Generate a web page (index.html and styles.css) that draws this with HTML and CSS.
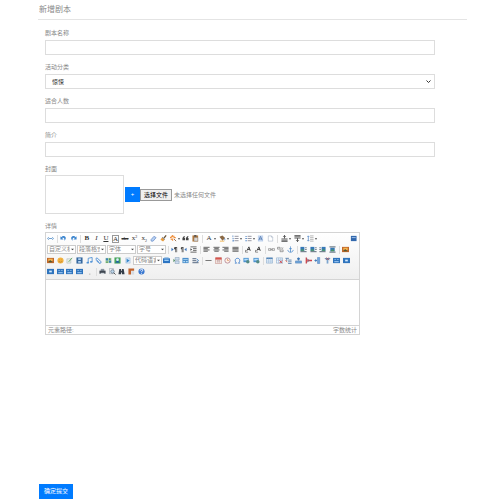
FILE: index.html
```html
<!DOCTYPE html>
<html lang="zh-CN">
<head>
    <meta charset="utf-8">
    <title>新增剧本</title>
    <meta name="viewport" content="width=device-width, initial-scale=1.0">
    <link rel="stylesheet" href="styles.css">
</head>
<body>
    <!-- icon sprite -->
    <svg class="sprite" aria-hidden="true">
        <symbol id="i-html" viewBox="0 0 16 16"><path d="M4 5 1 8l3 3M12 5l3 3-3 3M4 8h8" fill="none" stroke="#5b94cc" stroke-width="2"/></symbol>
        <symbol id="i-undo" viewBox="0 0 16 16"><path d="M1 3v7h7L5 7c3-2 6 0 5 6 5-5 4-10-1-11-3 0-5 1-6 3z" fill="#3d86cf"/></symbol>
        <symbol id="i-redo" viewBox="0 0 16 16"><path d="M15 3v7H8l3-3C8 5 5 7 6 13 1 8 2 3 7 2c3 0 5 1 6 3z" fill="#3d86cf"/></symbol>
        <symbol id="i-eraser" viewBox="0 0 16 16"><path d="m2 11 7-8 5 3-7 8H3z" fill="#b9d1f2" stroke="#5b83c4" stroke-width="1.5"/></symbol>
        <symbol id="i-brush" viewBox="0 0 16 16"><path d="m14 1-5 6" stroke="#6a5132" stroke-width="3"/><path d="m5 5 6 5-4 5-6-4z" fill="#e79b3e"/><path d="m5 5 6 5" stroke="#687b92" stroke-width="2"/></symbol>
        <symbol id="i-wand" viewBox="0 0 16 16"><path d="m9 9 5 5" stroke="#8a6044" stroke-width="2"/><path d="M6 0v5M6 8v5M0 6h4M8 6h5M2 2l2 2M10 2 8 4M2 11l2-2" stroke="#ef8f3b" stroke-width="2.5"/></symbol>
        <symbol id="i-quote" viewBox="0 0 16 16"><path d="M1 12V7l3-4h3L5 7h2v5zM9 12V7l3-4h3l-2 4h2v5z" fill="#444"/></symbol>
        <symbol id="i-paste" viewBox="0 0 16 16"><path d="M1 1h13v14H1z" fill="#b57a3d"/><path d="M5 0h5v4H5z" fill="#555"/><path d="M5 6h8v8H5z" fill="#f4f4f4" stroke="#777"/><path d="M7 9h4M7 12h4" stroke="#888"/></symbol>
        <symbol id="i-fill" viewBox="0 0 16 16"><path d="m1 4 7-3 6 6-6 6z" fill="#8a6844"/><path d="M12 7c3 1 3 4 1 6z" fill="#4c7fc0"/><path d="M2 13h10v2H2z" fill="#f0b34c"/></symbol>
        <symbol id="i-ol" viewBox="0 0 16 16"><path d="M6 3h9M6 8h9M6 13h9" stroke="#667" stroke-width="1.5"/><path d="M2 1v4M1 8h3M1 12h3v2H1" fill="none" stroke="#3d77bd" stroke-width="1.5"/></symbol>
        <symbol id="i-ul" viewBox="0 0 16 16"><path d="M6 3h9M6 8h9M6 13h9" stroke="#667" stroke-width="1.5"/><path d="M1 2h3v2H1zM1 7h3v2H1zM1 12h3v2H1z" fill="#3d77bd"/></symbol>
        <symbol id="i-all" viewBox="0 0 16 16"><path d="M2 1h12v14H2z" fill="#c5d6ef"/><path d="m4 12 4-9 4 9M5 9h6" fill="none" stroke="#456fa9" stroke-width="1.5"/></symbol>
        <symbol id="i-page" viewBox="0 0 16 16"><path d="M3 2h7l3 3v9H3z" fill="#fff" stroke="#8d9cb3"/><path d="M10 2v3h3" fill="none" stroke="#8d9cb3"/></symbol>
        <symbol id="i-rowtop" viewBox="0 0 16 16"><path d="M8 1v7M5 4l3-3 3 3" fill="none" stroke="#444" stroke-width="2"/><path d="M1 9h14M1 12h14M1 15h14" stroke="#555" stroke-width="2"/></symbol>
        <symbol id="i-rowbottom" viewBox="0 0 16 16"><path d="M8 7v8M5 12l3 3 3-3" fill="none" stroke="#444" stroke-width="2"/><path d="M1 1h14M1 4h14M1 7h14" stroke="#555" stroke-width="2"/></symbol>
        <symbol id="i-lineheight" viewBox="0 0 16 16"><path d="M7 2h8M7 6h8M7 10h8M7 14h8" stroke="#666"/><path d="M3 2v12M1 4l2-2 2 2M1 12l2 2 2-2" fill="none" stroke="#3d77bd" stroke-width="1.5"/></symbol>
        <symbol id="i-screen" viewBox="0 0 16 16"><path d="M2 2h13v12H2z" fill="#3268ad"/><path d="M4 5h9v2H4z" fill="#a9c9ee"/></symbol>
        <symbol id="i-ltr" viewBox="0 0 16 16"><path d="m1 4 5 4-5 4z" fill="#3d77bd"/><path d="M15 2H9c-3 1-3 5 0 6h1v6h2V4h1v10h1V2z" fill="#444"/></symbol>
        <symbol id="i-rtl" viewBox="0 0 16 16"><path d="m15 4-5 4 5 4z" fill="#3d77bd"/><path d="M9 2H4C1 3 1 7 4 8v6h2V4h1v10h1V2z" fill="#444"/></symbol>
        <symbol id="i-indent" viewBox="0 0 16 16"><path d="M1 2h14M7 6h8M7 10h8M1 14h14" stroke="#555" stroke-width="2"/><path d="m1 5 4 3-4 3z" fill="#444"/></symbol>
        <symbol id="i-left" viewBox="0 0 16 16"><path d="M1 3h14M1 6h10M1 9h14M1 12h10" stroke="#555" stroke-width="2"/></symbol>
        <symbol id="i-center" viewBox="0 0 16 16"><path d="M1 3h14M3 6h10M1 9h14M3 12h10" stroke="#555" stroke-width="2"/></symbol>
        <symbol id="i-right" viewBox="0 0 16 16"><path d="M1 3h14M5 6h10M1 9h14M5 12h10" stroke="#555" stroke-width="2"/></symbol>
        <symbol id="i-justify" viewBox="0 0 16 16"><path d="M1 3h14M1 6h14M1 9h14M1 12h14" stroke="#555" stroke-width="2"/></symbol>
        <symbol id="i-case" viewBox="0 0 16 16"><path d="m4 11 5-9 3 9M6 8h5" fill="none" stroke="#333" stroke-width="2"/><path d="M1 9v5h6" fill="none" stroke="#555" stroke-width="1.5"/></symbol>
        <symbol id="i-link" viewBox="0 0 16 16"><path d="M1 6h6v4H1zM9 6h6v4H9zM5 8h6" fill="none" stroke="#888" stroke-width="1.5"/></symbol>
        <symbol id="i-unlink" viewBox="0 0 16 16"><path d="M1 3h6v4H1zM7 9h7v4H7z" fill="none" stroke="#777" stroke-width="1.5"/><path d="m10 3 4 4m0-4-4 4" stroke="#999" stroke-width="1.5"/></symbol>
        <symbol id="i-anchor" viewBox="0 0 16 16"><path d="M8 4v10M5 6h6M2 9c0 7 12 7 12 0M8 1v3" fill="none" stroke="#4586c9" stroke-width="1.7"/></symbol>
        <symbol id="i-imgleft" viewBox="0 0 16 16"><path d="M1 2h9v9H1z" fill="#3678b7"/><path d="m1 11 4-5 5 5z" fill="#47985c"/><path d="M12 4h3M12 8h3M1 13h14" stroke="#456" stroke-width="2"/></symbol>
        <symbol id="i-imgright" viewBox="0 0 16 16"><path d="M6 2h9v9H6z" fill="#3678b7"/><path d="m6 11 4-5 5 5z" fill="#47985c"/><path d="M1 4h3M1 8h3M1 13h14" stroke="#456" stroke-width="2"/></symbol>
        <symbol id="i-imgcenter" viewBox="0 0 16 16"><path d="M3 4h10v8H3z" fill="#3678b7"/><path d="m3 12 5-5 5 5z" fill="#47985c"/><path d="M1 2h14M1 14h14" stroke="#456" stroke-width="2"/></symbol>
        <symbol id="i-photo" viewBox="0 0 16 16"><path d="M0 2h16v12H0z" fill="#c0682b"/><path d="M3 4h10v5H3z" fill="#f6b450"/><path d="m3 12 4-5 6 5z" fill="#4b5b34"/></symbol>
        <symbol id="i-smile" viewBox="0 0 16 16"><circle cx="8" cy="8" r="7" fill="#f3b340"/><path d="M5 6h1M10 6h1M4 9c2 4 6 4 8 0" fill="none" stroke="#b87a2c" stroke-width="1.5"/></symbol>
        <symbol id="i-scrawl" viewBox="0 0 16 16"><path d="M2 4h9v10H2z" fill="#e6eee5" stroke="#9ba8ae"/><path d="m14 2-8 9" stroke="#5da15a" stroke-width="2"/></symbol>
        <symbol id="i-video" viewBox="0 0 16 16"><path d="M1 1h14v14H1z" fill="#35689f"/><path d="M5 3h6v4H5zM5 9h6v4H5z" fill="#b5d5f5"/></symbol>
        <symbol id="i-music" viewBox="0 0 16 16"><path d="M5 13V3l9-2v10" fill="none" stroke="#4f91d5" stroke-width="2"/><ellipse cx="4" cy="13" rx="3" ry="2" fill="#4f91d5"/><ellipse cx="12" cy="11" rx="3" ry="2" fill="#4f91d5"/></symbol>
        <symbol id="i-clip" viewBox="0 0 16 16"><path d="m3 8 6 6c4 2 6-2 4-4L6 3C3 1 1 4 3 6l6 6" fill="none" stroke="#3b83d1" stroke-width="2"/></symbol>
        <symbol id="i-map" viewBox="0 0 16 16"><path d="M1 2h14v12H1z" fill="#b9d9b5"/><path d="M2 3h5v5H2zM9 8h5v5H9z" fill="#3d82b6"/><path d="M9 3h4v4H9zM2 10h5v3H2z" fill="#589b5a"/></symbol>
        <symbol id="i-gmap" viewBox="0 0 16 16"><path d="M1 1h14v14H1z" fill="#48a55b"/><path d="m3 13 5-7 5 7z" fill="#2465a5"/><circle cx="8" cy="6" r="3" fill="#d9ecff"/></symbol>
        <symbol id="i-frame" viewBox="0 0 16 16"><path d="M4 2h10v12H4z" fill="#d7e8fa" stroke="#8faed0"/><path d="m6 4 7 4-7 5z" fill="#3787c9"/></symbol>
        <symbol id="i-app" viewBox="0 0 16 16"><path d="M0 3h16v11H0z" fill="#2c74c2"/><path d="M3 6h10v3H3z" fill="#a7d6fb"/><path d="M3 1h10v2H3z" fill="#67a4db"/></symbol>
        <symbol id="i-pagebreak" viewBox="0 0 16 16"><path d="M5 1h9v6H5zM5 9h9v6H5z" fill="#cddced" stroke="#6d8ba9"/><path d="m1 4 4 4-4 4z" fill="#4c8d62"/></symbol>
        <symbol id="i-template" viewBox="0 0 16 16"><path d="M1 2h14v12H1z" fill="#4c8fcb"/><path d="M3 5h10v2H3zM3 9h4v3H3zM9 9h4v3H9z" fill="#b7def7"/></symbol>
        <symbol id="i-bg" viewBox="0 0 16 16"><path d="M1 2h8v3H1zM1 7h9v2H1zM1 11h14v3H1z" fill="#758397"/><path d="m10 4 5 4-4 3" fill="none" stroke="#4380bd" stroke-width="2"/></symbol>
        <symbol id="i-hr" viewBox="0 0 16 16"><path d="M1 8h14" stroke="#666" stroke-width="2"/></symbol>
        <symbol id="i-date" viewBox="0 0 16 16"><path d="M1 2h14v13H1z" fill="#f7e8e4" stroke="#b46e66"/><path d="M1 1h14v5H1z" fill="#d5554d"/><path d="M4 8h8M4 11h8M6 7v6M10 7v6" stroke="#b99"/></symbol>
        <symbol id="i-time" viewBox="0 0 16 16"><circle cx="8" cy="8" r="6" fill="#fff0e5" stroke="#b5899a" stroke-width="2"/><path d="M8 4v4h3" fill="none" stroke="#d58350" stroke-width="1.5"/></symbol>
        <symbol id="i-omega" viewBox="0 0 16 16"><path d="M2 14h4C1 10 2 3 8 3s7 7 2 11h4" fill="none" stroke="#3f7fcc" stroke-width="2"/></symbol>
        <symbol id="i-snap" viewBox="0 0 16 16"><path d="M1 2h12v10H1z" fill="#4d92d1"/><path d="M3 4h8v4H3z" fill="#b8e0fa"/><circle cx="11" cy="11" r="4" fill="#568b86"/></symbol>
        <symbol id="i-table" viewBox="0 0 16 16"><path d="M1 2h14v12H1z" fill="#eff6fd" stroke="#668fba"/><path d="M1 3h14" stroke="#4d80b4" stroke-width="3"/><path d="M1 7h14M1 11h14M6 3v11M11 3v11" stroke="#8bafd3"/></symbol>
        <symbol id="i-deltable" viewBox="0 0 16 16"><path d="M1 2h14v12H1z" fill="#eff6fd" stroke="#668fba"/><path d="M1 7h14M6 2v12M11 2v12" stroke="#7ba0c9"/><path d="m8 8 6 6m0-6-6 6" stroke="#d1494b" stroke-width="2"/></symbol>
        <symbol id="i-para" viewBox="0 0 16 16"><path d="M1 3h8M4 3v6M7 7h8M7 11h8M7 15h8" stroke="#557fac" stroke-width="2"/><path d="m1 8 4 3" stroke="#d85a4e" stroke-width="2"/></symbol>
        <symbol id="i-insrow" viewBox="0 0 16 16"><path d="M1 9h14v5H1z" fill="#74a9dd" stroke="#3d70aa"/><path d="M8 1v7M5 4h6" stroke="#3a75b4" stroke-width="3"/></symbol>
        <symbol id="i-delrow" viewBox="0 0 16 16"><path d="M3 1v14M5 8h11" stroke="#d0434a" stroke-width="3"/><path d="m4 4 6 4-6 4" fill="none" stroke="#7a6a83" stroke-width="2"/></symbol>
        <symbol id="i-inscol" viewBox="0 0 16 16"><path d="M8 1h5v14H8z" fill="#6fa6de" stroke="#3d74b4"/><path d="M1 8h6M4 5v6" stroke="#3a75b4" stroke-width="2"/></symbol>
        <symbol id="i-delcol" viewBox="0 0 16 16"><path d="M6 6h4v9H6z" fill="#7ea6cf"/><path d="M1 2h14l-4 5H5z" fill="#6f8fb4"/><path d="m5 1 7 6M11 1 5 7" stroke="#b5525a" stroke-width="1.5"/></symbol>
        <symbol id="i-cells" viewBox="0 0 16 16"><path d="M0 2h16v12H0z" fill="#2f74bd"/><path d="M3 5h4v2H3zM9 5h4v2H9zM3 9h10v3H3z" fill="#8fbdec"/></symbol>
        <symbol id="i-merge" viewBox="0 0 16 16"><path d="M0 2h16v12H0z" fill="#2f74bd"/><path d="M5 6h6v4H5z" fill="#d5ebff"/></symbol>
        <symbol id="i-chart" viewBox="0 0 16 16"><path d="M7 14h3" stroke="#aaa" stroke-width="2"/></symbol>
        <symbol id="i-print" viewBox="0 0 16 16"><path d="M4 2h8v5H4z" fill="#8994a0"/><path d="M1 6h14v7H1z" fill="#3e4650"/><path d="M4 11h8v3H4z" fill="#cfd5da"/></symbol>
        <symbol id="i-preview" viewBox="0 0 16 16"><path d="M1 1h9v12H1z" fill="#edf1f5" stroke="#7d8893"/><circle cx="8" cy="8" r="4" fill="#bbd5ea" stroke="#5c6c7d" stroke-width="1.5"/><path d="m11 11 4 4" stroke="#444" stroke-width="2"/></symbol>
        <symbol id="i-find" viewBox="0 0 16 16"><path d="M3 2h4v4h2V2h4l2 12H9v-4H7v4H1z" fill="#343d48"/></symbol>
        <symbol id="i-draft" viewBox="0 0 16 16"><path d="M1 1h13v5H7v9H1z" fill="#c0622d"/><path d="M8 7h6v8H8z" fill="#d5dbe2"/></symbol>
        <symbol id="i-help" viewBox="0 0 16 16"><circle cx="8" cy="8" r="7" fill="#3c79d0"/><path d="M5 6c0-4 6-4 6-1 0 2-3 2-3 4M8 11v2" fill="none" stroke="#fff" stroke-width="2"/></symbol>
    </svg>

    <div class="page">
        <h1 class="page-title">新增剧本</h1>

        <form class="script-form">
            <div class="field">
                <label for="name">剧本名称</label>
                <input class="control" type="text" id="name">
            </div>
            <div class="field">
                <label for="category">活动分类</label>
                <select class="control" id="category">
                    <option>惊悚</option>
                </select>
            </div>
            <div class="field">
                <label for="people">适合人数</label>
                <input class="control" type="text" id="people">
            </div>
            <div class="field">
                <label for="intro">简介</label>
                <input class="control" type="text" id="intro">
            </div>
            <div class="field">
                <label for="cover">封面</label>
                <div class="upload">
                    <div class="cover-preview"></div>
                    <button class="btn btn-add" type="button">+</button>
                    <input class="file-input" type="file" id="cover">
                    <label class="file-btn" for="cover">选择文件</label>
                    <span class="file-name">未选择任何文件</span>
                </div>
            </div>
            <div class="field">
                <label for="detail">详情</label>
                <div class="editor">
                    <div class="toolbar">
                        <div class="tool-row">
                            <div class="tools t1"><button type="button" title="源代码"><svg><use href="#i-html"/></svg></button></div>
                            <span class="sep"></span>
                            <div class="tools t2">
                                <button type="button" title="撤销"><svg><use href="#i-undo"/></svg></button>
                                <button type="button" title="重做"><svg><use href="#i-redo"/></svg></button>
                            </div>
                            <span class="sep"></span>
                            <div class="tools t9">
                                <button type="button" title="加粗"><b>B</b></button>
                                <button type="button" title="斜体"><i>I</i></button>
                                <button type="button" title="下划线"><u>U</u></button>
                                <button type="button" title="字符边框"><span class="boxed">A</span></button>
                                <button type="button" title="删除线"><s class="strike">abc</s></button>
                                <button type="button" title="上标">x<sup>2</sup></button>
                                <button type="button" title="下标">x<sub>2</sub></button>
                                <button type="button" title="清除格式"><svg><use href="#i-eraser"/></svg></button>
                                <button type="button" title="格式刷"><svg><use href="#i-brush"/></svg></button>
                            </div>
                            <button class="drop" type="button" title="自动排版"><svg><use href="#i-wand"/></svg></button>
                            <div class="tools t2">
                                <button type="button" title="引用"><svg><use href="#i-quote"/></svg></button>
                                <button type="button" title="纯文本粘贴"><svg><use href="#i-paste"/></svg></button>
                            </div>
                            <span class="sep"></span>
                            <button class="drop" type="button" title="字体颜色"><span class="letter">A</span></button>
                            <button class="drop" type="button" title="背景色"><svg><use href="#i-fill"/></svg></button>
                            <button class="drop" type="button" title="有序列表"><svg><use href="#i-ol"/></svg></button>
                            <button class="drop" type="button" title="无序列表"><svg><use href="#i-ul"/></svg></button>
                            <div class="tools t2">
                                <button type="button" title="全选"><svg><use href="#i-all"/></svg></button>
                                <button type="button" title="清空文档"><svg><use href="#i-page"/></svg></button>
                            </div>
                            <span class="sep"></span>
                            <button class="drop" type="button" title="段前距"><svg><use href="#i-rowtop"/></svg></button>
                            <button class="drop" type="button" title="段后距"><svg><use href="#i-rowbottom"/></svg></button>
                            <button class="drop" type="button" title="行间距"><svg><use href="#i-lineheight"/></svg></button>
                            <div class="tools t1 tools-end"><button type="button" title="全屏"><svg><use href="#i-screen"/></svg></button></div>
                        </div>

                        <div class="tool-row">
                            <select class="combo" aria-label="自定义标题"><option>自定义标题</option></select>
                            <select class="combo" aria-label="段落格式"><option>段落格式</option></select>
                            <select class="combo" aria-label="字体"><option>字体</option></select>
                            <select class="combo" aria-label="字号"><option>字号</option></select>
                            <span class="sep"></span>
                            <div class="tools t3">
                                <button type="button" title="从左向右输入"><svg><use href="#i-ltr"/></svg></button>
                                <button type="button" title="从右向左输入"><svg><use href="#i-rtl"/></svg></button>
                                <button type="button" title="首行缩进"><svg><use href="#i-indent"/></svg></button>
                            </div>
                            <span class="sep"></span>
                            <div class="tools t4">
                                <button type="button" title="居左对齐"><svg><use href="#i-left"/></svg></button>
                                <button type="button" title="居中对齐"><svg><use href="#i-center"/></svg></button>
                                <button type="button" title="居右对齐"><svg><use href="#i-right"/></svg></button>
                                <button type="button" title="两端对齐"><svg><use href="#i-justify"/></svg></button>
                            </div>
                            <span class="sep"></span>
                            <div class="tools t2">
                                <button type="button" title="字母大写"><svg><use href="#i-case"/></svg></button>
                                <button type="button" title="字母小写"><svg><use href="#i-case"/></svg></button>
                            </div>
                            <span class="sep"></span>
                            <div class="tools t3">
                                <button type="button" title="超链接"><svg><use href="#i-link"/></svg></button>
                                <button type="button" title="取消链接"><svg><use href="#i-unlink"/></svg></button>
                                <button type="button" title="锚点"><svg><use href="#i-anchor"/></svg></button>
                            </div>
                            <span class="sep"></span>
                            <div class="tools t4">
                                <button type="button" title="默认"><svg><use href="#i-imgleft"/></svg></button>
                                <button type="button" title="左浮动"><svg><use href="#i-imgleft"/></svg></button>
                                <button type="button" title="右浮动"><svg><use href="#i-imgright"/></svg></button>
                                <button type="button" title="居中"><svg><use href="#i-imgcenter"/></svg></button>
                            </div>
                            <span class="sep"></span>
                            <div class="tools t1"><button type="button" title="单图上传"><svg><use href="#i-photo"/></svg></button></div>
                        </div>

                        <div class="tool-row">
                            <div class="tools t9">
                                <button type="button" title="多图上传"><svg><use href="#i-photo"/></svg></button>
                                <button type="button" title="表情"><svg><use href="#i-smile"/></svg></button>
                                <button type="button" title="涂鸦"><svg><use href="#i-scrawl"/></svg></button>
                                <button type="button" title="视频"><svg><use href="#i-video"/></svg></button>
                                <button type="button" title="音乐"><svg><use href="#i-music"/></svg></button>
                                <button type="button" title="附件"><svg><use href="#i-clip"/></svg></button>
                                <button type="button" title="地图"><svg><use href="#i-map"/></svg></button>
                                <button type="button" title="Google地图"><svg><use href="#i-gmap"/></svg></button>
                                <button type="button" title="插入Iframe"><svg><use href="#i-frame"/></svg></button>
                            </div>
                            <select class="combo" aria-label="代码语言"><option>代码语言</option></select>
                            <div class="tools t4">
                                <button type="button" title="百度应用"><svg><use href="#i-app"/></svg></button>
                                <button type="button" title="分页"><svg><use href="#i-pagebreak"/></svg></button>
                                <button type="button" title="模板"><svg><use href="#i-template"/></svg></button>
                                <button type="button" title="背景"><svg><use href="#i-bg"/></svg></button>
                            </div>
                            <span class="sep"></span>
                            <div class="tools t6">
                                <button type="button" title="分隔线"><svg><use href="#i-hr"/></svg></button>
                                <button type="button" title="日期"><svg><use href="#i-date"/></svg></button>
                                <button type="button" title="时间"><svg><use href="#i-time"/></svg></button>
                                <button type="button" title="特殊字符"><svg><use href="#i-omega"/></svg></button>
                                <button type="button" title="截图"><svg><use href="#i-snap"/></svg></button>
                                <button type="button" title="图片转存"><svg><use href="#i-snap"/></svg></button>
                            </div>
                            <span class="sep"></span>
                            <div class="tools t9">
                                <button type="button" title="插入表格"><svg><use href="#i-table"/></svg></button>
                                <button type="button" title="删除表格"><svg><use href="#i-deltable"/></svg></button>
                                <button type="button" title="表格前插入行"><svg><use href="#i-para"/></svg></button>
                                <button type="button" title="前插入行"><svg><use href="#i-insrow"/></svg></button>
                                <button type="button" title="删除行"><svg><use href="#i-delrow"/></svg></button>
                                <button type="button" title="前插入列"><svg><use href="#i-inscol"/></svg></button>
                                <button type="button" title="删除列"><svg><use href="#i-delcol"/></svg></button>
                                <button type="button" title="合并多个单元格"><svg><use href="#i-cells"/></svg></button>
                                <button type="button" title="右合并单元格"><svg><use href="#i-merge"/></svg></button>
                            </div>
                        </div>

                        <div class="tool-row">
                            <div class="tools t5">
                                <button type="button" title="下合并单元格"><svg><use href="#i-merge"/></svg></button>
                                <button type="button" title="完全拆分单元格"><svg><use href="#i-cells"/></svg></button>
                                <button type="button" title="拆分成行"><svg><use href="#i-cells"/></svg></button>
                                <button type="button" title="拆分成列"><svg><use href="#i-cells"/></svg></button>
                                <button type="button" title="图表"><svg><use href="#i-chart"/></svg></button>
                            </div>
                            <span class="sep"></span>
                            <div class="tools t5">
                                <button type="button" title="打印"><svg><use href="#i-print"/></svg></button>
                                <button type="button" title="预览"><svg><use href="#i-preview"/></svg></button>
                                <button type="button" title="查询替换"><svg><use href="#i-find"/></svg></button>
                                <button type="button" title="从草稿箱加载"><svg><use href="#i-draft"/></svg></button>
                                <button type="button" title="帮助"><svg><use href="#i-help"/></svg></button>
                            </div>
                        </div>
                    </div>
                    <textarea class="editor-body" id="detail"></textarea>
                    <div class="editor-footer">
                        <span>元素路径:</span>
                        <span>字数统计</span>
                    </div>
                </div>
            </div>
            <button class="btn btn-submit" type="submit">确定提交</button>
        </form>
    </div>
</body>
</html>
```
FILE: styles.css
```css
* { box-sizing: border-box; }
body { margin: 0; background-color: #fff; color: #888; font-family: "Liberation Sans", "Noto Sans CJK SC", sans-serif; font-size: 6px; line-height: 12px; }
button, input, select, textarea { font-family: inherit; font-size: 6px; margin: 0; }
.sprite { position: absolute; width: 0; height: 0; }

.page { padding: 0 33px 0 38px; }
.page-title { margin: 0; padding: 4px 1px 3px; border-bottom: 1px solid #e4e4e4; font-size: 8px; line-height: 12px; font-weight: normal; }
.script-form { padding: 7px 32px 0 7px; }

.field { margin-bottom: 6px; }
.field label { display: block; }
.control { display: block; width: 100%; height: 15px; margin-top: 1px; padding: 0 6px; border: 1px solid #ddd; border-radius: 0; background-color: #fff; color: #333; }
select.control { appearance: none; background: url('data:image/svg+xml,<svg xmlns="http://www.w3.org/2000/svg" viewBox="0 0 10 10"><path d="M1 3l4 4 4-4" fill="none" stroke="%23333" stroke-width="2"/></svg>') no-repeat right 3px center / 5px 5px; }

.upload { display: flex; align-items: center; }
.cover-preview { width: 79px; height: 39px; margin-right: 1px; border: 1px solid #ddd; }
.btn { border: 0; background-color: #007bff; color: #fff; height: 15px; padding: 0 5px; line-height: 15px; cursor: pointer; }
.btn-add { width: 15px; }
.upload .file-btn { padding: 0 3px; border: 1px solid #999; background-color: #efefef; color: #000; line-height: 10px; }
.file-input { position: absolute; width: 1px; height: 1px; opacity: 0; }
.file-name { margin-left: 2px; }
.btn-submit { display: block; margin: 149px 0 0 -6px; }

/* rich text editor */
.editor { max-width: 315px; border: 1px solid #d4d4d4; }
.toolbar { padding-bottom: 2px; border-bottom: 1px solid #d4d4d4; background: linear-gradient(#fff, #efefef); }
.tool-row { display: flex; align-items: center; height: 11px; }
.tool-row button { display: flex; align-items: center; justify-content: center; padding: 0; border: 0; background: none; color: #333; height: 11px; font-family: "Liberation Serif", serif; font-size: 7px; line-height: 11px; }
.tool-row svg { width: 7px; height: 7px; flex: none; }
.tools { display: flex; flex: none; }
.tools button { flex: 1; min-width: 0; }
.t1 { width: 9px; }
.t2 { width: 19px; }
.t3 { width: 28px; }
.t4 { width: 38px; }
.t5 { width: 48px; }
.t6 { width: 57px; }
.t9 { width: 86px; }
.tools-end { margin-left: auto; margin-right: 1px; }
.sep { flex: none; width: 4px; height: 8px; background: linear-gradient(#ddd, #ddd) no-repeat center / 1px 100%; }
.tool-row .drop { width: 13px; gap: 1px; }
.drop::after { content: ""; border: 1px solid transparent; border-top: 2px solid #555; border-bottom: 0; }
.tool-row .letter { width: 7px; text-align: center; }
.boxed { border: 1px solid #999; line-height: 6px; }
.strike { font-family: "Liberation Sans", sans-serif; font-size: 4px; font-weight: bold; }
.tool-row sup, .tool-row sub { font-size: 4px; line-height: 4px; }
.tool-row sup { align-self: flex-start; margin-top: 2px; }
.tool-row sub { align-self: flex-end; margin-bottom: 1px; }
.combo { appearance: none; flex: none; width: 29px; height: 9px; margin-left: 1px; padding: 0 5px 0 1px; border: 1px solid #ccc; border-radius: 0; color: #888; line-height: 7px; background: #fff url('data:image/svg+xml,<svg xmlns="http://www.w3.org/2000/svg" viewBox="0 0 4 4"><path d="M0 1h4L2 3z" fill="%23444"/></svg>') no-repeat right 1px center / 3px 3px; }
.editor-body { display: block; width: 100%; height: 45px; padding: 4px; border: 0; resize: none; outline: 0; }
.editor-footer { display: flex; justify-content: space-between; padding: 0 2px; border-top: 1px solid #d4d4d4; line-height: 8px; }
```
